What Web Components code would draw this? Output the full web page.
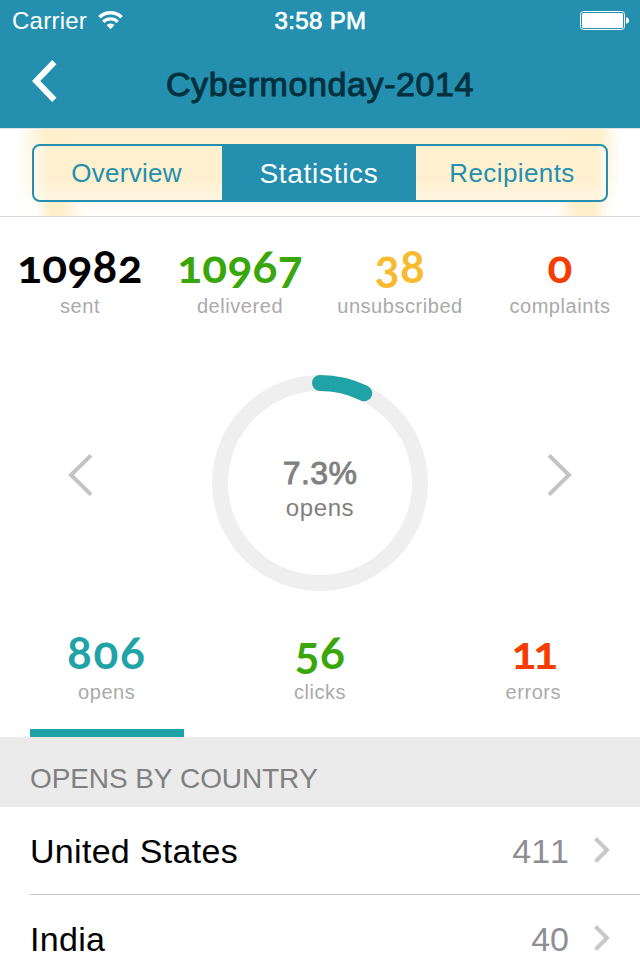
<!DOCTYPE html>
<html lang="en">
<head>
<meta charset="utf-8">
<title>Cybermonday-2014</title>
<style>
  html, body { margin:0; }
  body {
    width:640px; height:960px; overflow:hidden;
    background:#fff; color:#000;
    font-family:"Liberation Sans", Arial, sans-serif;
    font-kerning:none;
    --blue:#248fae; --teal:#1fa3a7; --green:#39a60b;
    --amber:#f8bb30; --red:#f53d00;
  }
</style>
</head>
<body>
  <campaign-screen></campaign-screen>

<script>
class StatusBar extends HTMLElement {
  constructor() {
    super();
    this.attachShadow({ mode: 'open' }).innerHTML = `
      <style>
        :host {
          display:grid; grid-template-columns:1fr auto 1fr; align-items:center;
          height:40px; padding:1px 11px 0 12px; box-sizing:border-box;
          color:#fff; font-size:24px; line-height:28px;
        }
        .left { display:flex; align-items:center; gap:11px; letter-spacing:.25px; }
        .time { letter-spacing:.35px; -webkit-text-stroke:.7px #fff; }
        .battery { justify-self:end; }
        svg { display:block; }
      </style>
      <div class="left">
        <span>Carrier</span>
        <svg width="25" height="19" viewBox="0 0 25 19" fill="none" stroke="#fff" stroke-width="3.4">
          <path d="M1.4 6.3a15.7 15.7 0 0 1 22.2 0"/>
          <path d="M5.3 10.9a10.2 10.2 0 0 1 14.4 0"/>
          <path d="M8.5 14a6 6 0 0 1 8 0L12.5 18.2z" fill="#fff" stroke="none"/>
        </svg>
      </div>
      <span class="time">3:58 PM</span>
      <svg class="battery" width="49" height="19" viewBox="0 0 49 19">
        <rect x=".5" y=".5" width="44" height="18" rx="3" fill="none" stroke="#fff"/>
        <rect x="2" y="2" width="41" height="15" rx="1.5" fill="#fff"/>
        <path d="M46 6.2q3 .6 3 3.3t-3 3.3z" fill="#fff"/>
      </svg>
    `;
  }
}

class NavBar extends HTMLElement {
  constructor() {
    super();
    this.attachShadow({ mode: 'open' }).innerHTML = `
      <style>
        :host {
          display:grid; grid-template-columns:60px 1fr 60px; align-items:center;
          height:88px;
        }
        svg { display:block; margin:-6px 0 0 32px; }
        h1 {
          margin:0; text-align:center; font-size:34px; font-weight:400;
          line-height:40px; letter-spacing:.6px; color:#01303f;
          -webkit-text-stroke:1px #01303f;
        }
      </style>
      <svg width="25" height="42" viewBox="0 0 25 42" fill="none" stroke="#fff" stroke-width="6">
        <path d="M22.3 2.2 4.2 21 22.3 39.8"/>
      </svg>
      <h1><slot></slot></h1>
    `;
  }
}

class SegmentTab extends HTMLElement {
  constructor() {
    super();
    this.attachShadow({ mode: 'open' }).innerHTML = `
      <style>
        :host {
          display:flex; align-items:center; justify-content:center;
          box-sizing:border-box; padding-top:1px;
          font-size:26px; letter-spacing:.4px; color:var(--blue);
        }
        :host(:first-child) { padding-right:3px; letter-spacing:.25px; }
        :host(:last-child) { padding-left:2px; }
        :host([selected]) {
          background:var(--blue); color:#fff;
          font-size:28px; letter-spacing:.7px;
        }
      </style>
      <slot></slot>
    `;
  }
}

class SegmentedControl extends HTMLElement {
  constructor() {
    super();
    this.attachShadow({ mode: 'open' }).innerHTML = `
      <style>
        :host {
          display:block; height:89px; box-sizing:border-box; padding:15px 32px 14px;
          border-top:1px solid #dfe3df; border-bottom:1px solid #d9d9db;
          background:
            linear-gradient(90deg, #fff 16px, #fff0 46px, #fff0 600px, #fff 620px),
            linear-gradient(90deg, #fff0cc00 36px, #fff0cc 50px, #fff0cc 62px, #fff0cc00 84px,
              #fff0cc00 556px, #fff0cc 576px, #fff0cc 594px, #fff0cc00 610px),
            linear-gradient(#fff0cf 0, #fff1d0 50px, #fffcf5 74px, #fffefb 100%);
        }
        .group {
          display:grid; grid-template-columns:188px 194px 1fr;
          height:58px; box-sizing:border-box; overflow:hidden;
          border:2px solid var(--blue); border-radius:8px;
          background:
            linear-gradient(90deg, #fffaf0 0, #fffaf000 14px, #fffaf000 562px, #fffaf0 100%),
            linear-gradient(#fff1d0 65%, #fff6e2);
        }
      </style>
      <div class="group"><slot></slot></div>
    `;
  }
}

class StatFigure extends HTMLElement {
  constructor() {
    super();
    this.attachShadow({ mode: 'open' }).innerHTML = `
      <style>
        :host { display:flex; flex-direction:column; align-items:center; }
        b {
          font:700 46px/50px Lato, sans-serif;
          font-feature-settings:"onum"; letter-spacing:.3px;
        }
        span {
          font-size:20px; line-height:24px; letter-spacing:.55px; color:#aaa;
          padding-top:3px;
        }
      </style>
      <b>${this.getAttribute('value')}</b>
      <span><slot></slot></span>
    `;
    const figure = this.shadowRoot.querySelector('b');
    figure.style.color = this.getAttribute('color');
    if (this.hasAttribute('spacing')) {
      figure.style.letterSpacing = this.getAttribute('spacing');
    }
  }
}

class RingGauge extends HTMLElement {
  constructor() {
    super();
    this.attachShadow({ mode: 'open' });
    this.percent = parseFloat(this.getAttribute('percent'));
    this._render();
  }

  _render() {
    this.shadowRoot.innerHTML = `
      <style>
        :host { display:grid; width:216px; height:216px; }
        svg, .label { grid-area:1 / 1; }
        .label {
          display:flex; flex-direction:column; align-items:center;
          padding-top:80px; color:#808080;
        }
        .value { font-size:32px; line-height:36px; letter-spacing:.4px; -webkit-text-stroke:.9px #808080; }
        .name { font-size:24px; line-height:28px; letter-spacing:.6px; padding-top:3px; }
      </style>
      <svg width="216" height="216" viewBox="0 0 216 216" fill="none" stroke-width="16">
        <circle cx="108" cy="108" r="100" stroke="#efefef"/>
        <circle cx="108" cy="108" r="100" stroke="#1fa3a7" stroke-linecap="round"
          pathLength="100" stroke-dasharray="${this.percent} 100" transform="rotate(-90 108 108)"/>
      </svg>
      <div class="label">
        <span class="value">${this.percent}%</span>
        <span class="name"><slot></slot></span>
      </div>
    `;
  }
}

class CountryRow extends HTMLElement {
  constructor() {
    super();
    this.attachShadow({ mode: 'open' }).innerHTML = `
      <style>
        :host {
          display:flex; align-items:center; height:88px; box-sizing:border-box;
          margin-left:30px; padding:0 30px 0 0; border-bottom:1px solid #c8c7cc;
          font-size:34px; line-height:40px; letter-spacing:.3px;
        }
        .name { flex:1; }
        .count { color:#8e8e93; margin-right:25px; letter-spacing:0; }
        svg { display:block; margin-top:-1px; }
      </style>
      <span class="name"><slot></slot></span>
      <span class="count">${this.getAttribute('count')}</span>
      <svg width="16" height="26" viewBox="0 0 16 26" fill="none" stroke="#c7c7cc" stroke-width="4">
        <path d="M1.5 1.5 13 13 1.5 24.5"/>
      </svg>
    `;
  }
}

class CampaignScreen extends HTMLElement {
  constructor() {
    super();
    this.attachShadow({ mode: 'open' }).innerHTML = `
      <style>
        :host { display:block; }
        header { background:var(--blue); height:128px; }
        .totals { display:grid; grid-template-columns:repeat(4, 1fr); padding-top:24px; height:134px; }
        .chart {
          display:flex; justify-content:space-between; align-items:flex-start;
          padding:0 68px; height:252px;
        }
        .chart svg { display:block; margin-top:79px; }
        .tabs { display:grid; grid-template-columns:repeat(3, 1fr); height:102px; }
        .marker { width:154px; height:8px; margin-left:30px; background:var(--teal); }
        h2 {
          margin:0; height:70px; box-sizing:border-box; padding:26px 30px 0;
          background:#ebebeb; color:#808080; letter-spacing:-.1px;
          font-size:28px; font-weight:400; line-height:32px;
        }
      </style>
      <header>
        <status-bar></status-bar>
        <nav-bar>Cybermonday-2014</nav-bar>
      </header>
      <segmented-control>
        <segment-tab>Overview</segment-tab>
        <segment-tab selected>Statistics</segment-tab>
        <segment-tab>Recipients</segment-tab>
      </segmented-control>
      <div class="totals">
        <stat-figure value="10982" color="#000">sent</stat-figure>
        <stat-figure value="10967" color="var(--green)">delivered</stat-figure>
        <stat-figure value="38" color="var(--amber)">unsubscribed</stat-figure>
        <stat-figure value="0" color="var(--red)">complaints</stat-figure>
      </div>
      <div class="chart">
        <svg width="25" height="42" viewBox="0 0 25 42" fill="none" stroke="#c4c4c4" stroke-width="4">
          <path d="M23 1.4 3 21 23 40.6"/>
        </svg>
        <ring-gauge percent="7.3">opens</ring-gauge>
        <svg width="25" height="42" viewBox="0 0 25 42" fill="none" stroke="#c4c4c4" stroke-width="4">
          <path d="M2 1.4 22 21 2 40.6"/>
        </svg>
      </div>
      <div class="tabs">
        <stat-figure value="806" color="var(--teal)" spacing="1.6px">opens</stat-figure>
        <stat-figure value="56" color="var(--green)">clicks</stat-figure>
        <stat-figure value="11" color="var(--red)" spacing="-3px">errors</stat-figure>
      </div>
      <div class="marker"></div>
      <h2>OPENS BY COUNTRY</h2>
      <country-row count="411">United States</country-row>
      <country-row count="40">India</country-row>
    `;
  }
}

customElements.define('status-bar', StatusBar);
customElements.define('nav-bar', NavBar);
customElements.define('segment-tab', SegmentTab);
customElements.define('segmented-control', SegmentedControl);
customElements.define('stat-figure', StatFigure);
customElements.define('ring-gauge', RingGauge);
customElements.define('country-row', CountryRow);
customElements.define('campaign-screen', CampaignScreen);
</script>
</body>
</html>
